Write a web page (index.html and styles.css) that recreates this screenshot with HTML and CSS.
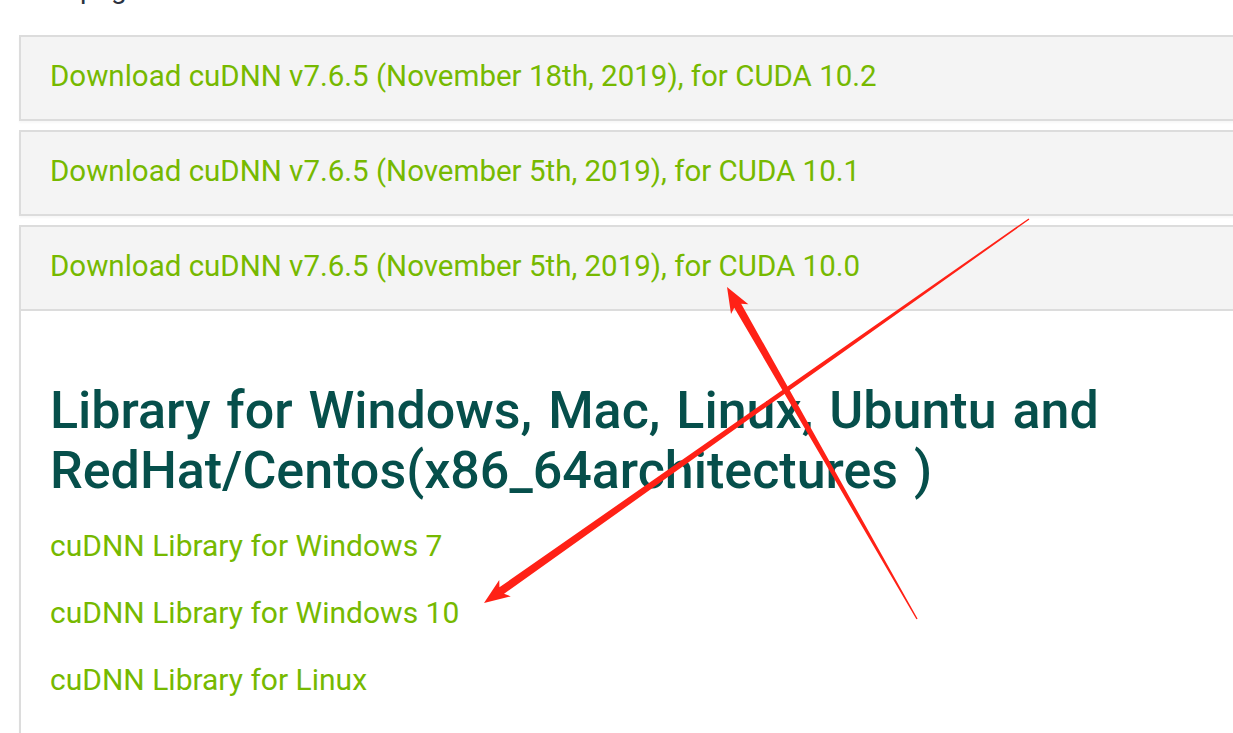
FILE: index.html
```html
<!DOCTYPE html>
<html>
<head>
<meta charset="utf-8">
<link rel="stylesheet" href="styles.css">
</head>
<body>
<div class="page">
  <p class="intro">page</p>
  <div class="accordion">
    <div class="panel">
      <a class="panel-head" href="#">Download cuDNN v7.6.5 (November 18th, 2019), for CUDA 10.2</a>
    </div>
    <div class="panel">
      <a class="panel-head" href="#">Download cuDNN v7.6.5 (November 5th, 2019), for CUDA 10.1</a>
    </div>
    <div class="panel open">
      <a class="panel-head" href="#">Download cuDNN v7.6.5 (November 5th, 2019), for CUDA 10.0</a>
      <div class="panel-body">
        <h3 class="lib-title">Library for Windows, Mac, Linux, Ubuntu and<br>RedHat/Centos(x86_64architectures )</h3>
        <a class="lib-link" href="#">cuDNN Library for Windows 7</a>
        <a class="lib-link" href="#">cuDNN Library for Windows 10</a>
        <a class="lib-link" href="#">cuDNN Library for Linux</a>
      </div>
    </div>
  </div>
</div>
<svg class="annot" width="1233" height="733" viewBox="0 0 1233 733">
  <g transform="translate(1029 219) rotate(144.83)">
    <polygon points="0,-0.7 645,-4 641,-10 666.7,0 641,10 645,4 0,0.7"/>
  </g>
  <g transform="translate(917 619) rotate(-119.78)">
    <polygon points="0,-0.7 361,-4 357,-10 382.5,0 357,10 361,4 0,0.7"/>
  </g>
</svg>
</body>
</html>
```
FILE: styles.css
```css
html, body {
  margin: 0;
  padding: 0;
  background: #fff;
  overflow: hidden;
}
body {
  position: relative;
  width: 1233px;
  height: 733px;
  font-family: Roboto, "Liberation Sans", sans-serif;
}
.page {
  padding-left: 19px;
}
.intro {
  margin: -25px 0 0 61px;
  height: 28px;
  font-size: 28px;
  line-height: 28px;
  color: #2b3240;
}
.accordion {
  margin-top: 32px;
  width: 1240px;
}
.panel {
  border: 2px solid #dcdcdc;
  border-right: 0;
  margin-bottom: 9px;
  background: #fff;
  box-shadow: 0 2px 2px rgba(0, 0, 0, 0.03);
}
.panel-head {
  display: flex;
  align-items: center;
  height: 82px;
  padding-left: 29px;
  background: #f4f4f4;
  color: #76b900;
  font-size: 29.5px;
  text-decoration: none;
  box-sizing: border-box;
  padding-bottom: 4px;
}
.open .panel-head {
  border-bottom: 2px solid #dcdcdc;
  height: 84px;
}
.open {
  border-bottom: 0;
  margin-bottom: 0;
}
.panel-body {
  display: flex;
  flex-direction: column;
  align-items: flex-start;
  padding: 70px 0 40px 29px;
}
.lib-title {
  margin: 0 0 11px;
  font-size: 52px;
  line-height: 60px;
  font-weight: 500;
  word-spacing: 3px;
  color: #064f4b;
}
.lib-link {
  color: #76b900;
  font-size: 30px;
  line-height: 67px;
  text-decoration: none;
}
.annot {
  position: absolute;
  left: 0;
  top: 0;
  pointer-events: none;
}
.annot polygon {
  fill: #ff2116;
}
```
